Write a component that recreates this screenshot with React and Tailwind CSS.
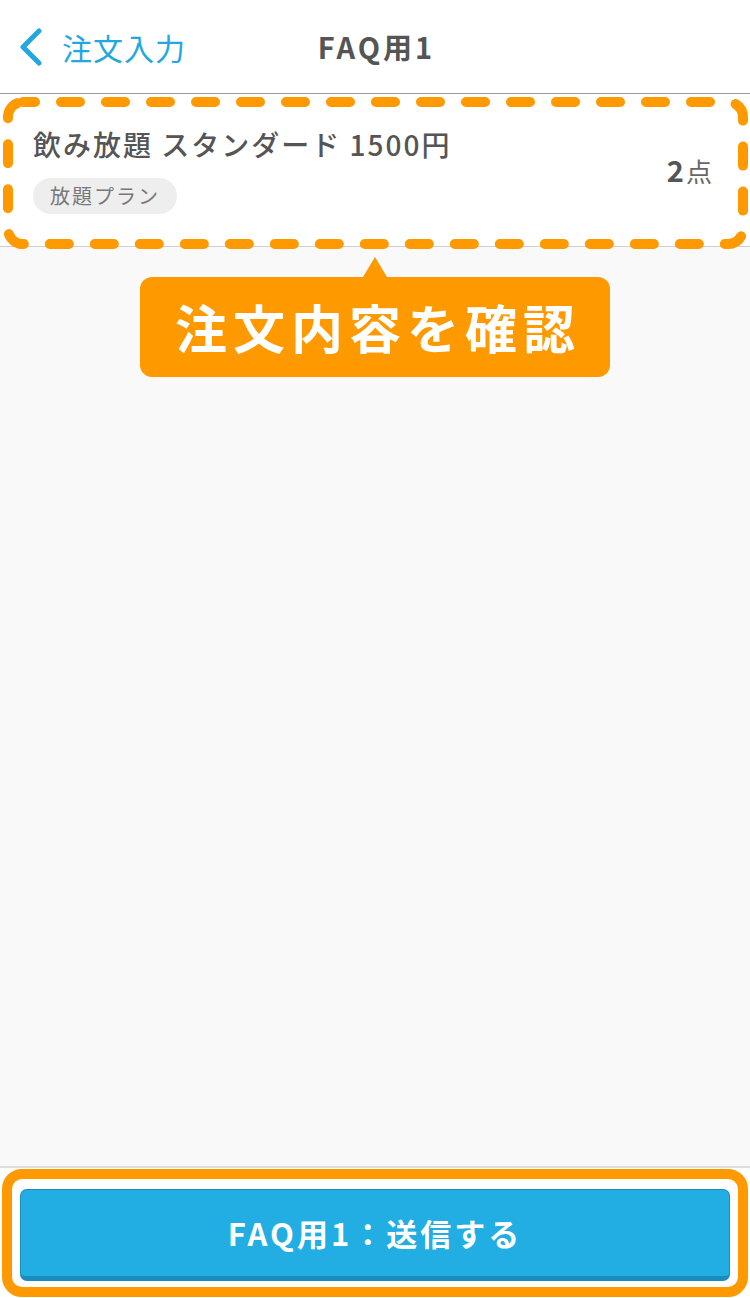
export default function App() {
  const font = { fontFamily: '"Noto Sans CJK JP", "Noto Sans", sans-serif' };

  return (
    <div className="w-[750px] h-[1298px] flex flex-col bg-[#f9f9f9] overflow-hidden" style={font}>
      {/* header */}
      <header className="h-[94px] shrink-0 bg-white border-b border-[#9a9a9a] grid grid-cols-[1fr_auto_1fr] items-center">
        <div className="flex items-center pl-[18px] text-[#22a7e0]">
          <svg width="26" height="38" viewBox="0 0 26 38" className="mr-[18px]">
            <polyline points="21,3 5,19 21,35" fill="none" stroke="currentColor" strokeWidth="5" strokeLinecap="round" strokeLinejoin="round" />
          </svg>
          <span className="text-[30px] leading-none tracking-[1px]">注文入力</span>
        </div>
        <h1 className="text-[29px] font-bold text-[#555] leading-none tracking-[3px] pl-[3px]">FAQ用1</h1>
        <div />
      </header>

      {/* order item */}
      <div className="relative h-[153px] shrink-0 bg-white border-b border-[#cfcfcf] flex items-center justify-between pl-[33px] pr-[38px]">
        <div className="flex flex-col items-start">
          <p className="text-[28px] leading-[36px] font-medium text-[#555] tracking-[2px]">飲み放題 スタンダード 1500円</p>
          <span className="mt-[16px] h-[36px] px-[17px] flex items-center rounded-full bg-[#eeeeee] text-[20px] text-[#777] tracking-[2px]">放題プラン</span>
        </div>
        <p className="text-[#555] flex items-baseline">
          <span className="text-[29px] font-bold mr-[2px]">2</span>
          <span className="text-[26px] text-[#666]">点</span>
        </p>
        <svg className="absolute left-0 top-0 pointer-events-none overflow-visible" width="750" height="160">
          <rect x="8" y="8" width="735" height="142" rx="15" fill="none" stroke="#ff9900" strokeWidth="10" strokeLinecap="round" strokeDasharray="19 26" strokeDashoffset="7" />
        </svg>
      </div>

      {/* content with tooltip */}
      <main className="flex-1 flex flex-col items-center pt-[10px]">
        <div className="w-0 h-0 border-x-[12px] border-x-transparent border-b-[20px] border-b-[#ff9900]" />
        <div className="w-[470px] h-[100px] rounded-[12px] bg-[#ff9900] flex items-center justify-center">
          <span className="text-white text-[52px] font-bold tracking-[6px] leading-none pl-[6px]">注文内容を確認</span>
        </div>
      </main>

      {/* footer */}
      <footer className="relative h-[132px] shrink-0 bg-white border-t-2 border-[#dddddd] px-[20px] pt-[21px]">
        <button className="w-full h-[92px] rounded-[7px] bg-[#22ade3] border border-[#1b8cbb] border-b-[5px] text-white text-[31px] font-bold tracking-[3px] flex items-center justify-center">
          FAQ用1：送信する
        </button>
        <div className="absolute left-[2px] right-[2px] top-[1px] bottom-[1px] border-[10px] border-[#ff9900] rounded-[20px] pointer-events-none" />
      </footer>
    </div>
  );
}
